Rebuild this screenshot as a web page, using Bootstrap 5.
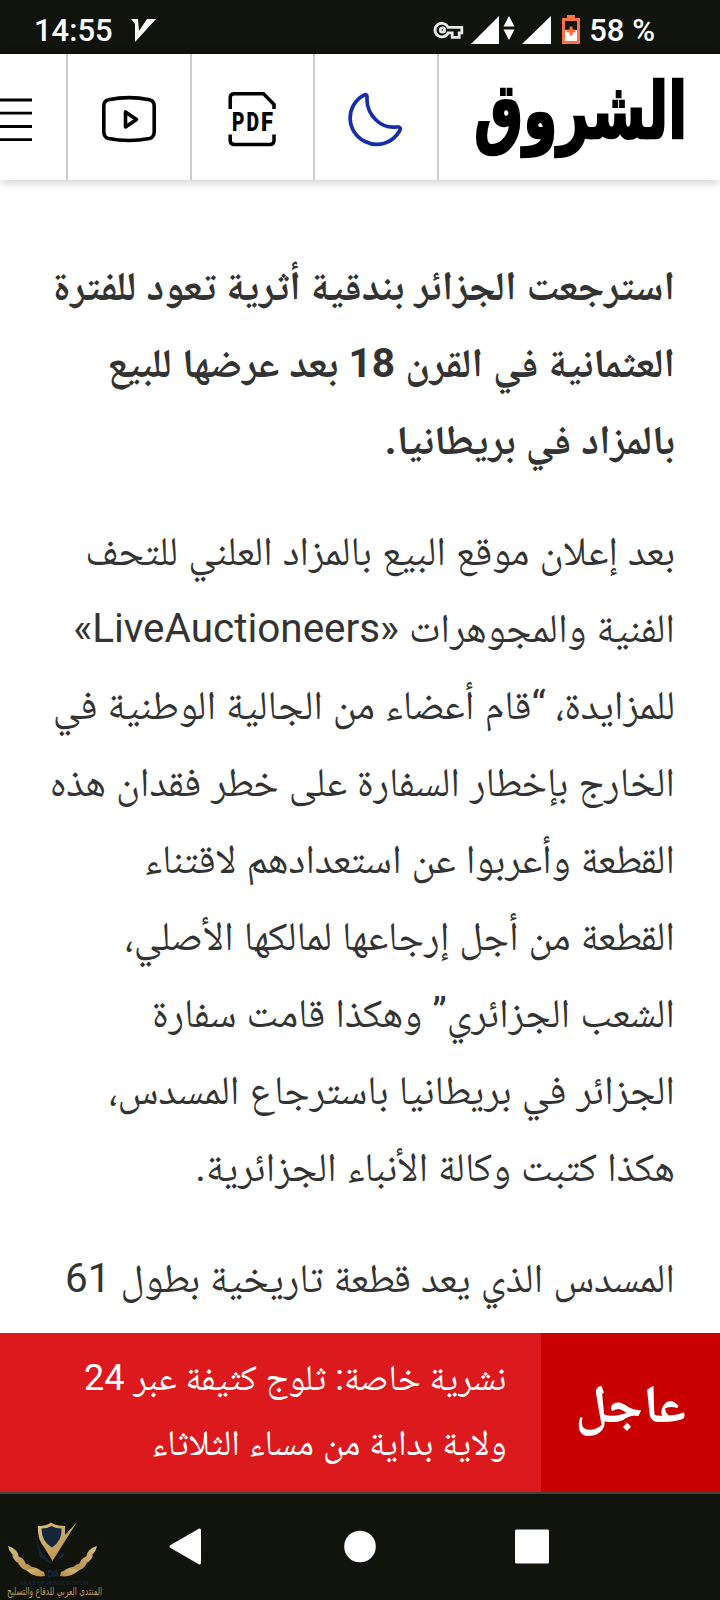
<!DOCTYPE html>
<html lang="ar" dir="rtl">
  <head>
    <meta charset="UTF-8" />
    <meta name="viewport" content="width=device-width, initial-scale=1.0" />
    <title>الشروق</title>
    <link
      href="https://cdn.jsdelivr.net/npm/bootstrap@5.3.0/dist/css/bootstrap.min.css"
      rel="stylesheet"
    />
    <style>
      body {
        font-family: Roboto, "Noto Naskh Arabic", "Droid Arabic Naskh",
          "Liberation Sans", sans-serif;
        color: #333;
        height: 1600px;
        overflow: hidden;
      }

      svg {
        display: block;
        flex: none;
      }

      .status-bar {
        height: 54px;
        background: #11140d;
        font-size: 31px;
        font-weight: 500;
        line-height: 36px;
        padding: 13px 65px 0 34px;
      }

      .top-bar {
        height: 126px;
        box-shadow: 0 2px 10px rgba(0, 0, 0, 0.2);
      }

      .top-cell {
        width: 123.5px;
        padding-top: 3px;
        border-right: 2px solid #ccc;
      }

      .top-cell.first {
        width: 68px;
      }

      .article {
        height: 1153px;
        padding: 68px 45px 0 0;
        font-size: 40.45px;
      }

      .article p {
        margin: 0 0 34px;
      }

      .article .lead-in {
        font-size: 40.65px;
      }

      .line {
        display: block;
        height: 77px;
        line-height: 77px;
        white-space: nowrap;
      }

      .breaking {
        height: 159px;
        background: #dc1a1d;
      }

      .breaking-label {
        width: 179px;
        background: #c90000;
        font-size: 53.5px;
        line-height: 80px;
        padding: 31px 34px 0 0;
      }

      .breaking-text {
        padding: 13px 34.5px 0 0;
        font-size: 36px;
      }

      .breaking-text .line {
        height: 65px;
        line-height: 65px;
      }

      .nav-keys {
        height: 108px;
        background: #11140d;
        border-top: 2px solid #42463d;
      }
    </style>
  </head>
  <body class="d-flex flex-column bg-white">
    <div class="status-bar d-flex justify-content-between flex-shrink-0 text-white" dir="ltr">
      <span>14:55</span>
      <svg width="470" height="36" viewBox="116 13 470 36">
        <path d="M131 19h7l1 12 8-12h9l-21 23 0-18z" fill="#fff" />
        <!-- vpn key -->
        <g fill="none" stroke="#e8e8e8" stroke-width="2.800">
          <path d="M448 27.300a6.800 6.800 0 1 0 0 5.600h4.200v4.500h7v-4.500h2.600v-5.600z" />
          <circle cx="442.500" cy="30" r="2.200" />
        </g>
        <path d="M499 16v28h-28zM551 16v28h-29z" fill="#fff" />
        <path d="M509 16l5.500 10.500h-11zM509 40l5.500-10.500h-11z" fill="#fff" />
        <!-- battery -->
        <path d="M567 15h8v3h5v26h-18V18h5z" fill="#ff7043" />
        <path d="M565 21h12v9h-12z" fill="#11140d" />
        <path d="M565 30h12v11h-12z" fill="#fff" />
        <path d="M569.600 26.500h3v3h3v3h-3v3h-3v-3h-3v-3h3z" fill="#ff7043" />
      </svg>
      <span class="text-nowrap">58 %</span>
    </div>

    <header class="top-bar d-flex flex-shrink-0 bg-white" dir="ltr">
      <div class="top-cell first d-flex align-items-center">
        <svg width="32" height="46" viewBox="0 0 32 46">
          <path d="M0 4h32M0 17.200h32M0 30.500h32M0 43.700h32" stroke="#000" stroke-width="2.800" />
        </svg>
      </div>
      <div class="top-cell d-flex align-items-center justify-content-center">
        <svg width="56" height="50" viewBox="0 0 56 50">
          <g fill="none" stroke="#000" stroke-width="3.600" stroke-linejoin="round">
            <path d="M7.500 5.700Q28 1.500 48.500 5.700Q53 6.500 53.200 12V38Q53 43.500 48.500 44.500Q28 48.500 7.500 44.500Q3 43.500 2.800 38V12Q3 6.500 7.500 5.700Z" />
            <path d="M24.500 18v15l11-7.500z" />
          </g>
        </svg>
      </div>
      <div class="top-cell d-flex align-items-center justify-content-center">
        <svg width="50" height="56" viewBox="0 0 50 56">
          <g fill="none" stroke="#000" stroke-width="3.500">
            <path d="M3.200 18V7Q3.200 2.800 7.500 2.800H36.500L47 13.500V18M3.200 43.500V49.500Q3.200 53.500 7.500 53.500H42.500Q47 53.500 47 49.500V43.500" />
          </g>
          <g font-size="25" font-weight="900">
            <text x="5" y="40" textLength="12.500" lengthAdjust="spacingAndGlyphs">P</text>
            <text x="19.500" y="40" textLength="12.500" lengthAdjust="spacingAndGlyphs">D</text>
            <text x="34" y="40" textLength="12" lengthAdjust="spacingAndGlyphs">F</text>
          </g>
        </svg>
      </div>
      <div class="top-cell d-flex align-items-center justify-content-center">
        <svg width="56" height="56" viewBox="0 0 56 56">
          <path
            d="M15.500 4.300Q19.500 2.200 19 7Q18.500 20 28 29Q37 37.500 48.500 36Q54 35.500 51.500 40A26 26 0 0 1 17 50.500A26 26 0 0 1 15.500 4.300Z"
            fill="none" stroke="#142eae" stroke-width="3.700" stroke-linejoin="round"
          />
        </svg>
      </div>
      <div class="ps-4">
        <svg width="240" height="126" viewBox="463 54 240 126">
          <text x="474" y="137.500" direction="ltr" font-family="'DejaVu Sans', sans-serif" font-weight="700" font-size="78"
            textLength="213" lengthAdjust="spacingAndGlyphs" stroke="#000" stroke-width="2.500">الشروق</text>
        </svg>
      </div>
    </header>

    <main class="article flex-shrink-0 overflow-hidden">
      <p class="lead-in fw-bold">
        <span class="line">استرجعت الجزائر بندقية أثرية تعود للفترة</span>
        <span class="line">العثمانية في القرن 18 بعد عرضها للبيع</span>
        <span class="line">بالمزاد في بريطانيا.</span>
      </p>
      <p>
        <span class="line">بعد إعلان موقع البيع بالمزاد العلني للتحف</span>
        <span class="line">الفنية والمجوهرات «LiveAuctioneers»</span>
        <span class="line">للمزايدة، “قام أعضاء من الجالية الوطنية في</span>
        <span class="line">الخارج بإخطار السفارة على خطر فقدان هذه</span>
        <span class="line">القطعة وأعربوا عن استعدادهم لاقتناء</span>
        <span class="line">القطعة من أجل إرجاعها لمالكها الأصلي،</span>
        <span class="line">الشعب الجزائري” وهكذا قامت سفارة</span>
        <span class="line">الجزائر في بريطانيا باسترجاع المسدس،</span>
        <span class="line">هكذا كتبت وكالة الأنباء الجزائرية.</span>
      </p>
      <p>
        <span class="line">المسدس الذي يعد قطعة تاريخية بطول 61</span>
      </p>
    </main>

    <section class="breaking d-flex flex-shrink-0 text-white">
      <div class="breaking-label fw-bold">عاجل</div>
      <div class="breaking-text">
        <span class="line">نشرية خاصة: ثلوج كثيفة عبر 24</span>
        <span class="line">ولاية بداية من مساء الثلاثاء</span>
      </div>
    </section>

    <footer class="nav-keys flex-shrink-0" dir="ltr">
      <svg width="720" height="106" viewBox="0 1494 720 106">
        <defs>
          <linearGradient id="gold" x1="0" x2="1" y1="0" y2="1">
            <stop offset="0" stop-color="#dcc07c" />
            <stop offset="1" stop-color="#b08a45" />
          </linearGradient>
          <g id="wing">
            <path d="M7 1541q2 8 11 9l-2 3q-8-2-9-12z" fill="#15263a" />
            <path d="M8 1546q10 3 11 11q-9-1-11-11zM12 1555q12 1 14 9q-11 1-14-9zM18 1563q12-1 16 7q-11 3-16-7z" fill="url(#gold)" />
            <path d="M26 1570q9-4 18 2l1 4q-11 2-19-6zM30 1567q10-1 15 10q-5-7-15-10z" fill="url(#gold)" />
          </g>
        </defs>
        <!-- forum emblem -->
        <use href="#wing" />
        <use href="#wing" transform="translate(105 0) scale(-1 1)" />
        <path d="M34 1532l7 20 11 12-12-7zM65 1552l-2 5-8 4z" fill="#15263a" />
        <path d="M38 1526q9 0 13-3.500q5 3.500 14 3.500v9L77 1522L52.500 1561L44 1547Q37 1539 38 1526z" fill="url(#gold)" />
        <path d="M41.500 1528.500q6 0 10-2.500q4 2.500 10 2.500q1 12-9.500 19q-10.500-6-10.500-19z" fill="#15263a" />
        <text x="47" y="1577" font-family="'DejaVu Sans'" font-size="8" font-weight="700" fill="#15263a" textLength="12">DA</text>
        <text x="19" y="1585" font-family="'Liberation Serif'" font-size="7" font-weight="700" fill="#15263a" textLength="70" lengthAdjust="spacingAndGlyphs">ARAB DEFENSE FORUM</text>
        <text x="7" y="1595" font-family="'DejaVu Sans'" font-size="11" fill="#b99a5b" textLength="95" lengthAdjust="spacingAndGlyphs">المنتدى العربي للدفاع والتسليح</text>
        <!-- back, home, recents -->
        <g fill="#fff" stroke="#fff" stroke-width="3" stroke-linejoin="round">
          <path d="M199.500 1530v33L171 1546.500z" />
          <circle cx="360" cy="1546.500" r="14.300" />
          <path d="M516.500 1531h31v31h-31z" />
        </g>
      </svg>
    </footer>
    <script src="https://cdn.jsdelivr.net/npm/bootstrap@5.3.0/dist/js/bootstrap.bundle.min.js"></script>
  </body>
</html>
